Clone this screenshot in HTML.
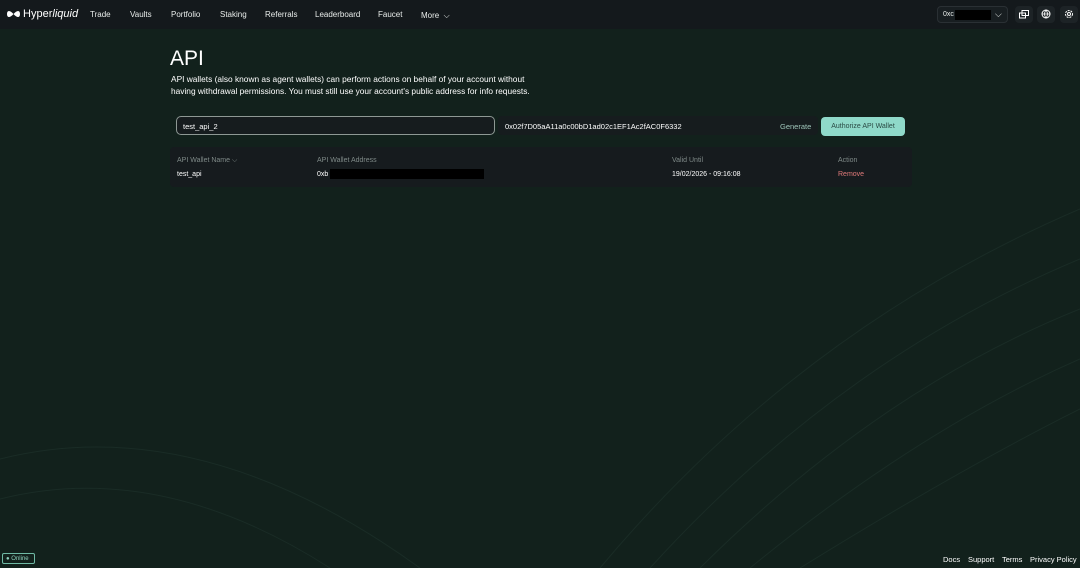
<!DOCTYPE html>
<html><head><meta charset="utf-8"><style>
*{margin:0;padding:0;box-sizing:border-box}
body{width:1080px;height:568px;overflow:hidden;background:#12211c;font-family:"Liberation Sans",sans-serif;color:#fff;position:relative}
.nav{position:absolute;top:0;left:0;width:1080px;height:29px;background:#14191c;}
.nav span{position:absolute;top:10px;font-size:8px;color:#e8ecea}
.logo{position:absolute;left:7px;top:8px;font-size:11px;color:#fff}
.h1{position:absolute;left:170px;top:47px;font-size:21px;color:#fff}
.desc{position:absolute;left:171px;top:74px;font-size:8.35px;line-height:11.5px;color:#fff}
.inp{position:absolute;left:176px;top:116px;width:319px;height:19px;border:1px solid #8e9894;border-radius:5px;background:#161c1e;font-size:7.5px;padding:5px 6px}
.addr{position:absolute;left:498px;top:116px;width:320px;height:19px;background:#161c1e;border-radius:4px;font-size:7.5px;padding:6px 7px}
.gen{position:absolute;left:780px;top:122px;font-size:7.5px;color:#9ec5b9}
.auth{position:absolute;left:821px;top:117px;width:84px;height:19px;background:#8fd9c9;border-radius:4px;font-size:7px;color:#2a4a44;text-align:center;line-height:19px}
.tbl{position:absolute;left:170px;top:147px;width:742px;height:40px;background:#161b1e;border-radius:4px}
.tbl span{position:absolute;font-size:7px}
.hd{color:#7f8a88;top:10px}
.rw{color:#fff;top:24px}
.foot{position:absolute;top:555px;font-size:7.5px;color:#fff}
</style></head><body>
<svg style="position:absolute;left:0;top:29px" width="1080" height="539"><g fill="none" stroke="#1a2c26" stroke-width="1">
<path d="M600 539 Q800 300 1080 180"/><path d="M650 539 Q840 330 1080 230"/><path d="M700 539 Q880 360 1080 280"/><path d="M750 539 Q920 400 1080 330"/><path d="M800 539 Q960 440 1080 380"/><path d="M0 430 Q200 380 420 539"/><path d="M0 470 Q160 430 330 539"/></g></svg>
<div class="nav">
<div class="logo"><svg width="13" height="8" viewBox="0 0 13 8" style="vertical-align:-1px"><path d="M0 4C0 0 3 0 6.5 4C10 8 13 8 13 4C13 0 10 0 6.5 4C3 8 0 8 0 4Z" fill="#fff"/></svg> Hyper<i>liquid</i></div>
<span style="left:90px">Trade</span><span style="left:130px">Vaults</span><span style="left:171px">Portfolio</span><span style="left:220px">Staking</span><span style="left:265px">Referrals</span><span style="left:315px">Leaderboard</span><span style="left:378px">Faucet</span><span style="left:421px;top:11px">More &nbsp;⌵</span>
<div style="position:absolute;left:937px;top:6px;width:71px;height:17px;border:1px solid #2a3034;border-radius:4px;background:#181e21"><span style="left:5px;top:4px;font-size:7px">0xc</span><div style="position:absolute;left:17px;top:3px;width:36px;height:10px;background:#000"></div><span style="left:57px;top:2px;font-size:9px">⌵</span></div>
<div style="position:absolute;left:1015px;top:6px;width:18px;height:17px;background:#1d2326;border-radius:4px"></div>
<div style="position:absolute;left:1037px;top:6px;width:18px;height:17px;background:#1d2326;border-radius:4px"></div>
<div style="position:absolute;left:1060px;top:6px;width:18px;height:17px;background:#1d2326;border-radius:4px"></div>
<svg style="position:absolute;left:1019px;top:10px" width="10" height="9"><rect x="0.5" y="3" width="6" height="5" fill="none" stroke="#fff"/><rect x="3" y="0.5" width="6.5" height="5" fill="none" stroke="#fff"/></svg>
<svg style="position:absolute;left:1041px;top:9px" width="10" height="10"><circle cx="5" cy="5" r="4" fill="none" stroke="#fff"/><path d="M1 5H9M5 1Q2 5 5 9Q8 5 5 1" fill="none" stroke="#fff" stroke-width=".8"/></svg>
<svg style="position:absolute;left:1064px;top:9px" width="10" height="10"><circle cx="5" cy="5" r="3.5" fill="none" stroke="#fff" stroke-dasharray="2 1"/><circle cx="5" cy="5" r="1.5" fill="none" stroke="#fff"/></svg>
</div>
<div class="h1">API</div>
<div class="desc">API wallets (also known as agent wallets) can perform actions on behalf of your account without<br>having withdrawal permissions. You must still use your account's public address for info requests.</div>
<div class="inp">test_api_2</div>
<div class="addr">0x02f7D05aA11a0c00bD1ad02c1EF1Ac2fAC0F6332</div>
<div class="gen">Generate</div>
<div class="auth">Authorize API Wallet</div>
<div class="tbl">
<span class="hd" style="left:7px">API Wallet Name ⌵</span><span class="hd" style="left:147px">API Wallet Address</span><span class="hd" style="left:502px">Valid Until</span><span class="hd" style="left:668px">Action</span>
<span class="rw" style="left:7px">test_api</span><span class="rw" style="left:147px">0xb</span><div style="position:absolute;left:160px;top:22px;width:154px;height:10px;background:#000"></div><span class="rw" style="left:502px">19/02/2026 - 09:16:08</span><span class="rw" style="left:668px;color:#e07a7a">Remove</span>
</div>
<div style="position:absolute;left:2px;top:553px;width:33px;height:11px;border:1px solid #6fb9a4;border-radius:2px;font-size:6px;color:#8fd0bd;padding:2px 3px">● Online</div>
<span class="foot" style="left:943px">Docs</span><span class="foot" style="left:968px">Support</span><span class="foot" style="left:1002px">Terms</span><span class="foot" style="left:1030px">Privacy Policy</span>
</body></html>
